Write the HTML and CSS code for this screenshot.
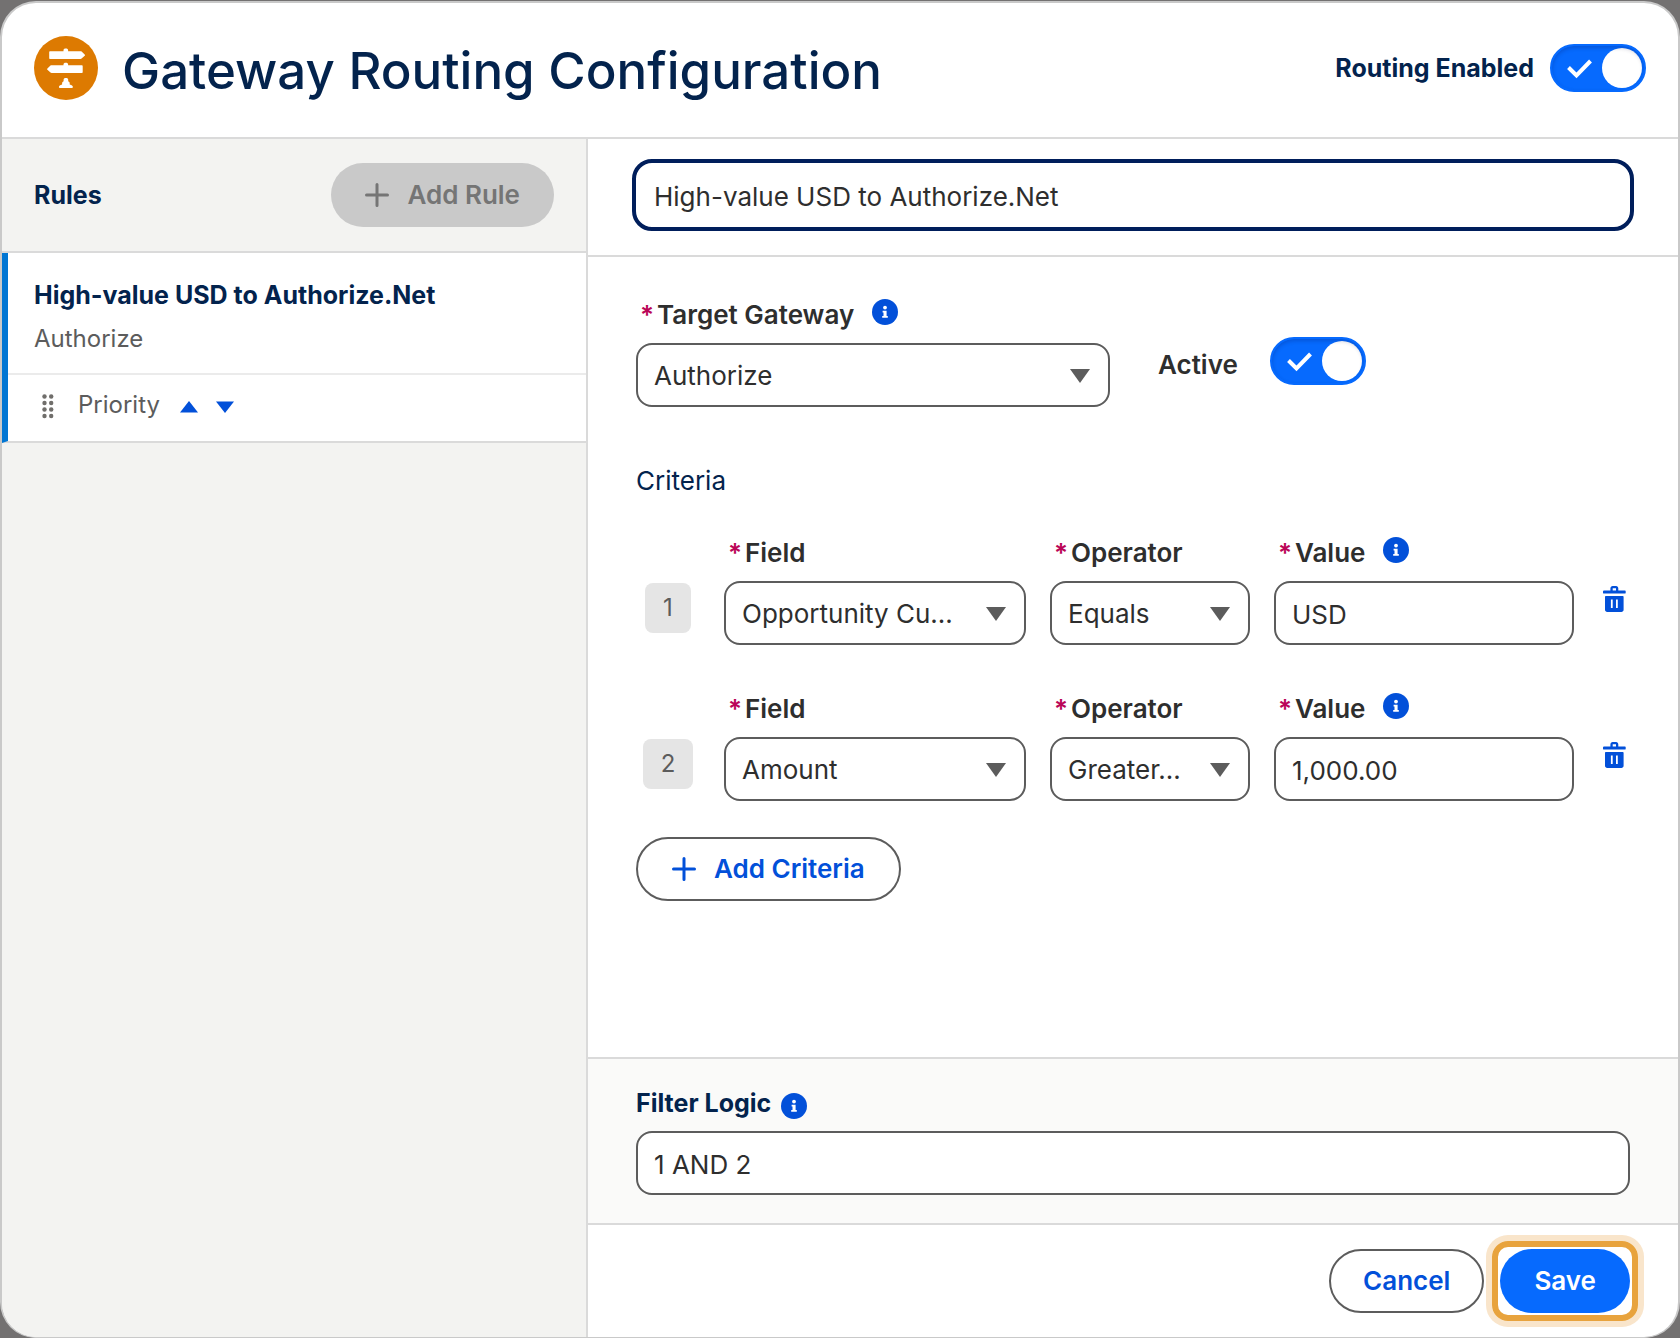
FILE: index.html
```html
<!DOCTYPE html>
<html lang="en">
<head>
<meta charset="utf-8">
<meta name="viewport" content="width=device-width, initial-scale=1">
<title>Gateway Routing Configuration</title>
<link rel="stylesheet" href="styles.css">
</head>
<body>
<svg class="sprite" aria-hidden="true">
  <symbol id="info" viewBox="0 0 26 26">
    <circle cx="13" cy="13" r="13" fill="#0250d9"/>
    <circle cx="13" cy="8.6" r="1.9" fill="#fff"/>
    <path d="M10.6 11.8h4v5.3h1.2v1.7h-5.6v-1.7h1.3v-3.6h-.9z" fill="#fff"/>
  </symbol>
  <symbol id="trash" viewBox="0 0 23 26">
    <path d="M1 4.6h6.4V2.4C7.4 1 8.400 0 9.600 0h3.500c1.300 0 2.200 1 2.200 2.400v2.200h6.400c.6 0 1 .4 1 .9v1.200c0 .5-.4.9-1 .9H1c-.6 0-1-.4-1-.9V5.500c0-.5.4-.9 1-.9zM9.700 2.300v2.300H13V2.300z" fill="currentColor" fill-rule="evenodd"/>
    <path d="M3 10h16.600c.6 0 1 .4 1 1v12.800c0 1.300-1 2.200-2.200 2.200H4.200C3 26 2 25.100 2 23.800V11c0-.6.4-1 1-1zm4.900 3.400v8.600H9.700v-8.600zm5.100 0v8.600h1.800v-8.600z" fill="currentColor" fill-rule="evenodd"/>
  </symbol>
  <symbol id="plus" viewBox="0 0 24 24">
    <path d="M12 1.500v21M1.500 12h21" stroke="currentColor" stroke-width="3" stroke-linecap="round"/>
  </symbol>
</svg>

<main class="dialog">
  <header class="dialog-header">
    <svg class="signpost" viewBox="0 0 64 64" aria-hidden="true">
      <circle cx="32" cy="32" r="32" fill="#dd7a01"/>
      <g fill="#fff">
        <path d="M16.200 15.200H29.500V14c0-.9.8-1.500 2.300-1.500s2.300.6 2.300 1.500v1.200H46.500c.5 0 .8.1 1.100.4l3.100 2.800c.5.400.5.900 0 1.300l-3.100 2.900c-.3.300-.6.400-1.100.4H16.200c-.6 0-1-.4-1-1v-5.800c0-.6.4-1 1-1z"/>
        <path d="M47.700 29.200H34.100V28.200c0-.9-.8-1.500-2.300-1.500s-2.300.6-2.300 1.500v1H17.600c-.5 0-.8.1-1.100.4l-3.100 2.800c-.5.400-.5.900 0 1.300l3.100 2.900c.3.300.6.400 1.100.4h30.100c.6 0 1-.4 1-1v-5.800c0-.6-.4-1-1-1z"/>
        <path d="M31.900 42c1.500 0 2.300.6 2.300 1.700v1.500c1 .5 1.500 1.100 1.500 2v1.400c2 .5 3.200 1.500 3.200 2.500 0 .6-.4.900-1 .9H25.900c-.6 0-1-.3-1-.9 0-1 1.200-2 3.200-2.500v-1.400c0-.9.500-1.500 1.500-2v-1.500c0-1.100.8-1.700 2.300-1.700z"/>
      </g>
    </svg>
    <h1 class="dialog-title">Gateway Routing Configuration</h1>
    <label class="header-toggle">Routing Enabled
      <input class="toggle" type="checkbox" checked>
    </label>
  </header>

  <div class="dialog-body">
    <aside class="sidebar">
      <div class="sidebar-header">
        <h2 class="heading">Rules</h2>
        <button class="button button-disabled" type="button" disabled><svg class="plus" aria-hidden="true"><use href="#plus"/></svg>Add Rule</button>
      </div>
      <article class="rule">
        <div class="rule-summary">
          <h3 class="heading">High-value USD to Authorize.Net</h3>
          <p class="rule-gateway">Authorize</p>
        </div>
        <div class="rule-priority">
          <svg class="grip" viewBox="0 0 12 26" aria-hidden="true">
            <g fill="#706e6b">
              <circle cx="2.500" cy="2.500" r="2.200"/><circle cx="9.200" cy="2.500" r="2.200"/>
              <circle cx="2.500" cy="9" r="2.200"/><circle cx="9.200" cy="9" r="2.200"/>
              <circle cx="2.500" cy="15.500" r="2.200"/><circle cx="9.200" cy="15.500" r="2.200"/>
              <circle cx="2.500" cy="22" r="2.200"/><circle cx="9.200" cy="22" r="2.200"/>
            </g>
          </svg>
          <span>Priority</span>
          <div class="rule-moves">
            <button class="move" type="button" aria-label="Move up"><svg viewBox="0 0 18 12"><path d="M9 0l9 11.500H0z"/></svg></button>
            <button class="move" type="button" aria-label="Move down"><svg viewBox="0 0 18 12"><path d="M9 12L0 .5h18z"/></svg></button>
          </div>
        </div>
      </article>
    </aside>

    <form class="editor">
      <div class="name-bar">
        <input class="control control-focused" type="text" aria-label="Rule name" value="High-value USD to Authorize.Net">
      </div>

      <div class="editor-main">
        <div class="gateway-row">
          <div class="field gateway-field">
            <div class="field-label"><span class="required">*</span><label for="gateway">Target Gateway</label><svg class="info" aria-hidden="true"><use href="#info"/></svg></div>
            <select class="control" id="gateway"><option>Authorize</option></select>
          </div>
          <label class="active-toggle">Active
            <input class="toggle" type="checkbox" checked>
          </label>
        </div>

        <h2 class="criteria-title">Criteria</h2>

        <div class="criteria">
          <div class="criterion">
            <span class="badge">1</span>
            <div class="field">
              <div class="field-label"><span class="required">*</span><label for="field-1">Field</label></div>
              <select class="control" id="field-1"><option>Opportunity Cu...</option></select>
            </div>
            <div class="field">
              <div class="field-label"><span class="required">*</span><label for="operator-1">Operator</label></div>
              <select class="control" id="operator-1"><option>Equals</option></select>
            </div>
            <div class="field">
              <div class="field-label"><span class="required">*</span><label for="value-1">Value</label><svg class="info" aria-hidden="true"><use href="#info"/></svg></div>
              <input class="control" id="value-1" type="text" value="USD">
            </div>
            <button class="delete" type="button" aria-label="Delete criterion 1"><svg aria-hidden="true"><use href="#trash"/></svg></button>
          </div>

          <div class="criterion">
            <span class="badge">2</span>
            <div class="field">
              <div class="field-label"><span class="required">*</span><label for="field-2">Field</label></div>
              <select class="control" id="field-2"><option>Amount</option></select>
            </div>
            <div class="field">
              <div class="field-label"><span class="required">*</span><label for="operator-2">Operator</label></div>
              <select class="control" id="operator-2"><option>Greater...</option></select>
            </div>
            <div class="field">
              <div class="field-label"><span class="required">*</span><label for="value-2">Value</label><svg class="info" aria-hidden="true"><use href="#info"/></svg></div>
              <input class="control" id="value-2" type="text" value="1,000.00">
            </div>
            <button class="delete" type="button" aria-label="Delete criterion 2"><svg aria-hidden="true"><use href="#trash"/></svg></button>
          </div>
        </div>

        <button class="button button-neutral button-add" type="button"><svg class="plus" aria-hidden="true"><use href="#plus"/></svg>Add Criteria</button>
      </div>

      <div class="filter">
        <div class="filter-label"><label class="heading" for="logic">Filter Logic</label><svg class="info" aria-hidden="true"><use href="#info"/></svg></div>
        <input class="control" id="logic" type="text" value="1 AND 2">
      </div>

      <footer class="actions">
        <button class="button button-neutral" type="button">Cancel</button>
        <div class="highlight"><button class="button button-brand" type="button">Save</button></div>
      </footer>
    </form>
  </div>
</main>
</body>
</html>
```
FILE: styles.css
```css
* {
  box-sizing: border-box;
}

body {
  margin: 0;
  padding-top: 1px;
  background: #737171;
  color: #2e2e2e;
  font: 400 26px/32px Inter, "Liberation Sans", sans-serif;
}

h1, h2, h3, p {
  margin: 0;
}

button, input, select {
  margin: 0;
  font: inherit;
  color: inherit;
}

.sprite {
  display: none;
}

.dialog {
  display: flex;
  flex-direction: column;
  min-height: calc(100vh - 1px);
  overflow: hidden;
  border: 2px solid #c9c9c9;
  border-bottom-width: 1px;
  border-radius: 36px;
  background: #fff;
}

/* Header */

.dialog-header {
  display: flex;
  align-items: center;
  gap: 24px;
  padding: 30px 32px 34px;
  border-bottom: 2px solid #dadada;
  color: #03234d;
}

.signpost {
  flex: none;
  width: 64px;
  height: 64px;
}

.dialog-title {
  flex: 1;
  padding-top: 6px;
  font-size: 51px;
  line-height: 64px;
  font-weight: 500;
}

.header-toggle {
  display: flex;
  align-items: center;
  gap: 16px;
  font-size: 25px;
  font-weight: 700;
}

.toggle {
  appearance: none;
  flex: none;
  width: 96px;
  height: 48px;
  border: 2px solid #066afe;
  border-radius: 24px;
  background: #066afe url("data:image/svg+xml,%3Csvg xmlns='http://www.w3.org/2000/svg' viewBox='0 0 92 44'%3E%3Ccircle cx='70' cy='22' r='20' fill='%23fff'/%3E%3Cpath d='M16.500 21.500l8 8L38.500 15' fill='none' stroke='%23fff' stroke-width='4'/%3E%3C/svg%3E") center / 92px 44px no-repeat;
  box-shadow: inset 0 2px 4px rgba(0, 0, 60, 0.2);
}

/* Body */

.dialog-body {
  flex: 1;
  display: grid;
  grid-template-columns: 586px 1fr;
}

.heading {
  color: #03234d;
  font-size: 25px;
  line-height: 32px;
  font-weight: 700;
}

.sidebar {
  border-right: 2px solid #dadada;
  background: #f3f3f1;
}

.sidebar-header {
  display: flex;
  align-items: center;
  justify-content: space-between;
  padding: 24px 32px;
  border-bottom: 2px solid #dadada;
}

.rule {
  border-left: 6px solid #0176d3;
  border-bottom: 2px solid #dadada;
  background: #fff;
  color: #5c5c5c;
  font-size: 24px;
}

.rule-summary {
  display: grid;
  gap: 12px;
  padding: 26px 26px 18px;
  border-bottom: 2px solid #ebebeb;
}

.rule-priority {
  display: flex;
  align-items: center;
  padding: 14px 34px 20px;
}

.grip {
  width: 12px;
  height: 26px;
  margin: 4px 24px 0 0;
}

.rule-moves {
  display: flex;
  gap: 18px;
  margin: 4px 0 0 20px;
}

.move {
  display: flex;
  width: 18px;
  padding: 0;
  border: 0;
  background: none;
}

.move svg {
  width: 18px;
  height: 12px;
  fill: #0250d9;
}

/* Buttons */

.button {
  display: inline-flex;
  align-items: center;
  height: 64px;
  padding: 0 32px;
  border: 2px solid transparent;
  border-radius: 32px;
  font-weight: 600;
}

.plus {
  width: 24px;
  height: 24px;
  margin-right: 18px;
}

.button-disabled {
  background: #c9c9c9;
  color: #757575;
}

.button-neutral {
  border-color: #5c5c5c;
  background: #fff;
  color: #0250d9;
}

.button-brand {
  background: #066afe;
  color: #fff;
}

.button-add {
  margin-top: 36px;
  padding: 0 34px;
}

/* Form controls */

.control {
  display: block;
  width: 100%;
  height: 64px;
  padding: 2px 16px 0;
  border: 2px solid #5c5c5c;
  border-radius: 16px;
  background: #fff;
  outline: 0;
}

select.control {
  appearance: none;
  padding-right: 40px;
  background: #fff url("data:image/svg+xml,%3Csvg xmlns='http://www.w3.org/2000/svg' viewBox='0 0 20 14'%3E%3Cpath d='M0 0h20L10 14z' fill='%235c5c5c'/%3E%3C/svg%3E") right 18px top 24px / 20px 14px no-repeat;
}

.control-focused {
  height: 72px;
  padding: 2px 18px 0;
  border: 4px solid #001e5b;
  border-radius: 20px;
}

.field-label {
  display: flex;
  margin-bottom: 12px;
  padding-left: 4px;
  font-weight: 600;
}

.required {
  width: 17px;
  color: #ba0557;
}

.info {
  flex: none;
  width: 26px;
  height: 26px;
  margin-left: 18px;
}

/* Rule editor */

.editor {
  display: flex;
  flex-direction: column;
  min-width: 0;
}

.name-bar {
  padding: 20px 44px 24px;
  border-bottom: 2px solid #dadada;
}

.editor-main {
  flex: 1;
  padding: 42px 48px;
}

.gateway-row {
  display: flex;
  align-items: flex-end;
  gap: 48px;
}

.gateway-field {
  width: 474px;
}

.active-toggle {
  display: flex;
  align-items: center;
  gap: 32px;
  margin-bottom: 14px;
  font-weight: 600;
}

.active-toggle .toggle {
  margin-bottom: 8px;
}

.criteria-title {
  margin: 58px 0 40px;
  color: #03234d;
  font-size: 26px;
  font-weight: 400;
}

.criteria {
  display: grid;
  gap: 48px;
}

.criterion {
  display: grid;
  grid-template-columns: 64px 302fr 200fr 300fr 32px;
  column-gap: 24px;
  align-items: end;
}

.badge {
  justify-self: center;
  margin-bottom: 12px;
  padding: 9px 18px;
  border-radius: 8px;
  background: #e5e5e5;
  color: #5c5c5c;
  font-size: 24px;
}

.delete {
  display: grid;
  place-items: center;
  height: 32px;
  margin-bottom: 30px;
  padding: 0;
  border: 0;
  background: none;
  color: #0250d9;
}

.delete svg {
  width: 23px;
  height: 26px;
}

.filter {
  padding: 28px 48px;
  border-top: 2px solid #dadada;
  border-bottom: 2px solid #dadada;
  background: #fafaf9;
}

.filter-label {
  display: flex;
  align-items: flex-end;
  margin-bottom: 12px;
}

.filter-label .info {
  margin-left: 10px;
}

.actions {
  display: flex;
  align-items: center;
  justify-content: flex-end;
  gap: 8px;
  padding: 16px 40px;
}

.highlight {
  padding: 2px;
  border: 6px solid #e8a33d;
  border-radius: 16px;
  box-shadow: 0 0 0 6px #f9e5cb;
}

.highlight .button {
  display: flex;
}
```
